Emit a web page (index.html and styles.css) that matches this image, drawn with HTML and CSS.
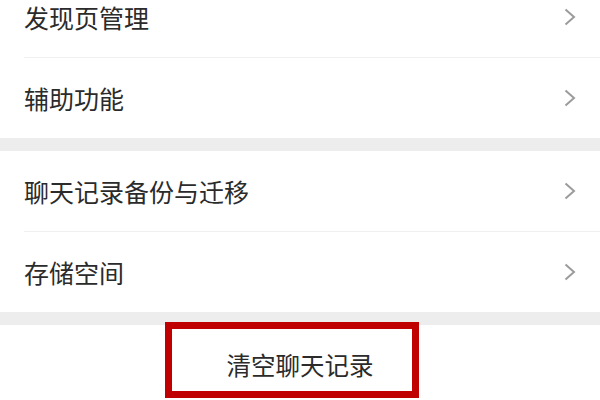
FILE: index.html
```html
<!DOCTYPE html>
<html lang="zh-CN">
    <head>
        <meta charset="UTF-8">
        <meta name="viewport" content="width=device-width, initial-scale=1.0">
        <title>设置</title>
        <link rel="stylesheet" href="styles.css">
    </head>
    <body>
        <!-- Premier groupe -->
        <div class="group first">
            <div class="row">
                <span class="label">发现页管理</span>
                <svg class="arrow" viewBox="0 0 12 18"><polyline points="1.5,1.5 10,9 1.5,16.5"/></svg>
            </div>
            <div class="row">
                <span class="label">辅助功能</span>
                <svg class="arrow" viewBox="0 0 12 18"><polyline points="1.5,1.5 10,9 1.5,16.5"/></svg>
            </div>
        </div>
        <div class="gap"></div>
        <!-- Deuxième groupe -->
        <div class="group">
            <div class="row">
                <span class="label">聊天记录备份与迁移</span>
                <svg class="arrow" viewBox="0 0 12 18"><polyline points="1.5,1.5 10,9 1.5,16.5"/></svg>
            </div>
            <div class="row">
                <span class="label">存储空间</span>
                <svg class="arrow" viewBox="0 0 12 18"><polyline points="1.5,1.5 10,9 1.5,16.5"/></svg>
            </div>
        </div>
        <div class="gap"></div>
        <!-- Bouton effacer -->
        <div class="clear">
            <span class="clear-text">清空聊天记录</span>
            <div class="highlight"></div>
        </div>
    </body>
</html>
```

FILE: styles.css
```css
/* Style global */
body, html {
    margin: 0;
    padding: 0;
    height: 100%;
    background-color: #ffffff;
    color: #2b2b2b;
    font-family: "Noto Sans CJK SC", "Noto Sans", sans-serif;
    overflow: hidden;
}

/* Groupes de lignes */
.group {
    background-color: #ffffff;
}

.group.first {
    margin-top: -23px;
}

.row {
    display: flex;
    align-items: center;
    justify-content: space-between;
    height: 80px;
    margin-left: 24px;
    padding-right: 24px;
    border-bottom: 1px solid #efefef;
}

.row:last-child {
    border-bottom: none;
}

.label {
    font-size: 25px;
    line-height: 1;
    color: #2b2b2b;
}

.arrow {
    width: 12px;
    height: 18px;
    fill: none;
    stroke: #9b9b9b;
    stroke-width: 2;
}

/* Séparateur gris */
.gap {
    height: 13px;
    background-color: #ededed;
}

/* Bouton effacer */
.clear {
    position: relative;
    height: 80px;
    display: flex;
    align-items: center;
    justify-content: center;
}

.clear-text {
    font-size: 24.5px;
    line-height: 1;
    color: #2b2b2b;
}

.highlight {
    position: absolute;
    left: 165px;
    top: -3px;
    width: 254px;
    height: 76px;
    box-sizing: border-box;
    border: 7px solid #c00000;
}
```
